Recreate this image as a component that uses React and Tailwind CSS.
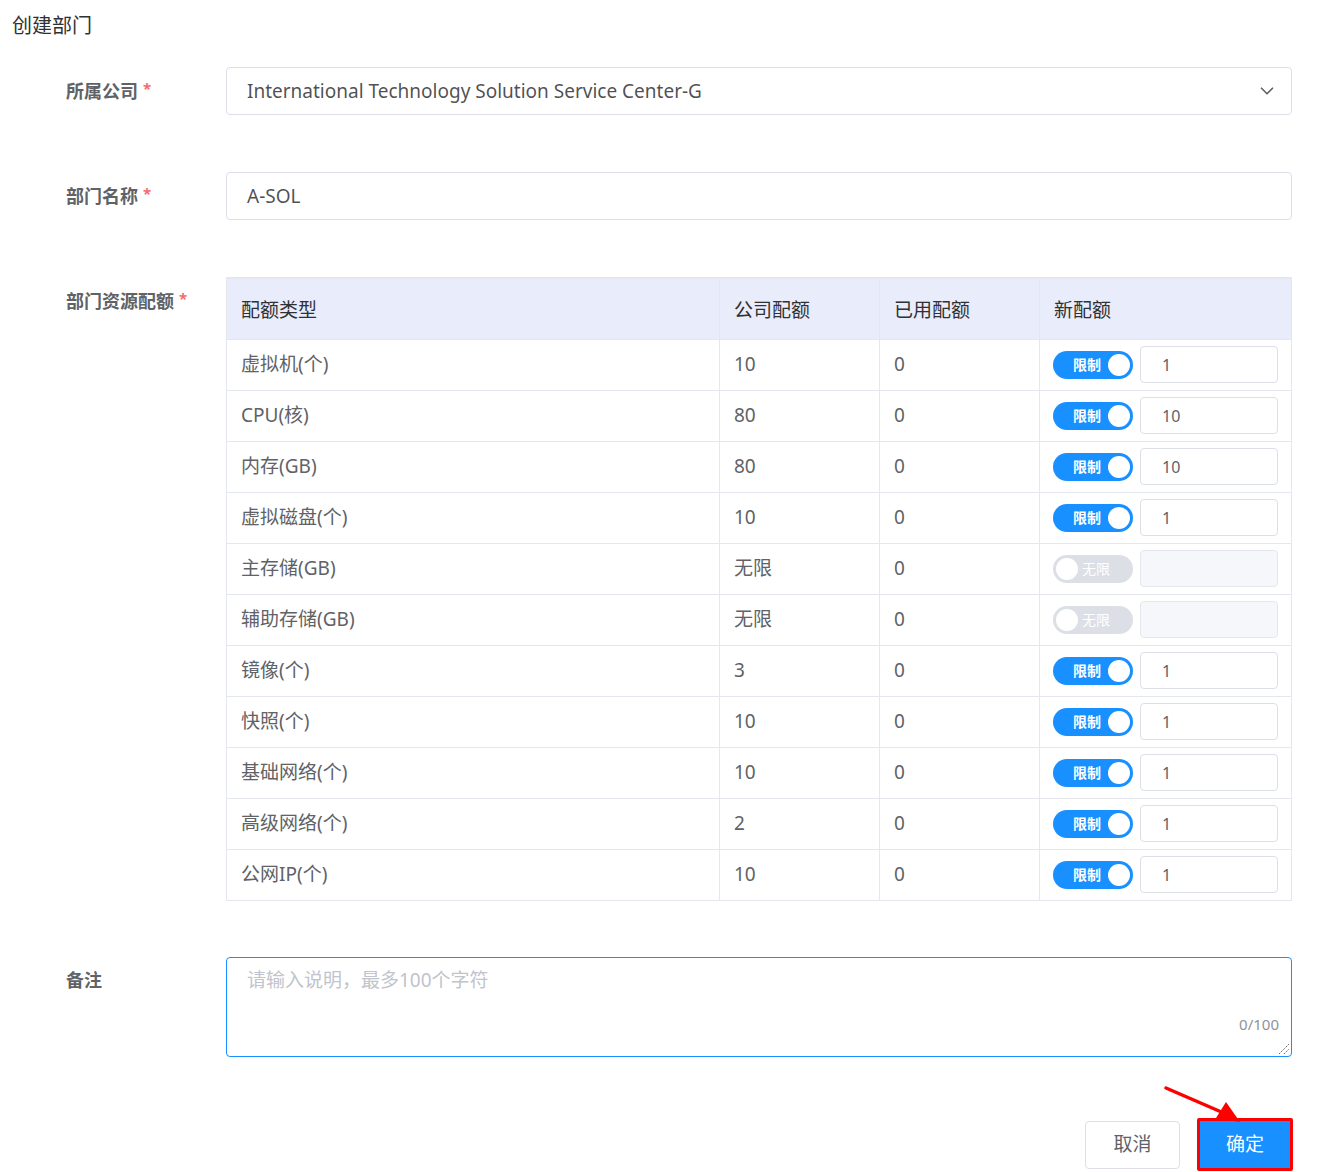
import { ChevronDown } from "lucide-react";

const rows = [
  { name: "虚拟机(个)", company: "10", used: "0", limit: true, value: "1" },
  { name: "CPU(核)", company: "80", used: "0", limit: true, value: "10" },
  { name: "内存(GB)", company: "80", used: "0", limit: true, value: "10" },
  { name: "虚拟磁盘(个)", company: "10", used: "0", limit: true, value: "1" },
  { name: "主存储(GB)", company: "无限", used: "0", limit: false, value: "" },
  { name: "辅助存储(GB)", company: "无限", used: "0", limit: false, value: "" },
  { name: "镜像(个)", company: "3", used: "0", limit: true, value: "1" },
  { name: "快照(个)", company: "10", used: "0", limit: true, value: "1" },
  { name: "基础网络(个)", company: "10", used: "0", limit: true, value: "1" },
  { name: "高级网络(个)", company: "2", used: "0", limit: true, value: "1" },
  { name: "公网IP(个)", company: "10", used: "0", limit: true, value: "1" },
];

const font = { fontFamily: '"Noto Sans", "Noto Sans CJK SC", sans-serif' };

function Label({ text, required }) {
  return (
    <div className="w-[160px] shrink-0 h-[48px] flex items-center text-[18px] font-bold text-[#606266]">
      {text}
      {required && <span className="text-[#f56c6c] ml-[5px] text-[15px] -mt-[6px]">*</span>}
    </div>
  );
}

function Switch({ on }) {
  if (on) {
    return (
      <div className="w-[80px] h-[28px] rounded-full bg-[#1890ff] flex items-center justify-between pl-[20px] pr-[3px]">
        <span className="text-white text-[14px] font-bold">限制</span>
        <span className="w-[22px] h-[22px] rounded-full bg-white" />
      </div>
    );
  }
  return (
    <div className="w-[80px] h-[28px] rounded-full bg-[#dcdfe6] flex items-center pl-[3px] gap-[4px]">
      <span className="w-[22px] h-[22px] rounded-full bg-white" />
      <span className="text-white text-[14px]">无限</span>
    </div>
  );
}

export default function App() {
  return (
    <div className="relative w-[1340px] h-[1172px] bg-white text-[#606266]" style={font}>
      <h1 className="pl-[12px] pt-[12px] text-[20px] leading-[28px] text-[#303133]">创建部门</h1>

      <div className="pl-[66px] pr-[48px] mt-[27px] flex flex-col gap-[57px]">
        {/* company */}
        <div className="flex">
          <Label text="所属公司" required />
          <div className="flex-1 h-[48px] border border-[#dcdfe6] rounded-[4px] flex items-center justify-between pl-[20px] pr-[13px]">
            <span className="text-[19px] text-[#303133]/85">International Technology Solution Service Center-G</span>
            <ChevronDown size={22} strokeWidth={1.8} className="text-[#606266]" />
          </div>
        </div>

        {/* name */}
        <div className="flex">
          <Label text="部门名称" required />
          <div className="flex-1 h-[48px] border border-[#dcdfe6] rounded-[4px] flex items-center pl-[20px]">
            <span className="text-[19px] text-[#303133]/85">A-SOL</span>
          </div>
        </div>

        {/* quota table */}
        <div className="flex">
          <Label text="部门资源配额" required />
          <div className="flex-1">
            <table className="w-full border-collapse table-fixed border border-[#e4e7ed] border-t-2 text-[19px]">
              <colgroup>
                <col className="w-[493px]" />
                <col className="w-[160px]" />
                <col className="w-[160px]" />
                <col />
              </colgroup>
              <thead>
                <tr className="h-[61px] bg-[#e8ecfb] text-[#303133] text-left">
                  <th className="font-normal pl-[14px] pt-[2px] border-r border-b border-[#e4e7ed]">配额类型</th>
                  <th className="font-normal pl-[14px] pt-[2px] border-r border-b border-[#e4e7ed]">公司配额</th>
                  <th className="font-normal pl-[14px] pt-[2px] border-r border-b border-[#e4e7ed]">已用配额</th>
                  <th className="font-normal pl-[14px] pt-[2px] border-b border-[#e4e7ed]">新配额</th>
                </tr>
              </thead>
              <tbody>
                {rows.map((r) => (
                  <tr key={r.name} className="h-[51px]">
                    <td className="pl-[14px] border-r border-b border-[#e4e7ed]">{r.name}</td>
                    <td className="pl-[14px] border-r border-b border-[#e4e7ed]">{r.company}</td>
                    <td className="pl-[14px] border-r border-b border-[#e4e7ed]">{r.used}</td>
                    <td className="pl-[13px] border-b border-[#e4e7ed]">
                      <div className="flex items-center gap-[7px]">
                        <Switch on={r.limit} />
                        <div
                          className={`w-[138px] h-[37px] rounded-[4px] border flex items-center pl-[21px] text-[16px] ${
                            r.limit ? "border-[#dcdfe6] bg-white" : "border-[#e4e7ed] bg-[#f5f7fa]"
                          }`}
                        >
                          {r.value}
                        </div>
                      </div>
                    </td>
                  </tr>
                ))}
              </tbody>
            </table>
          </div>
        </div>

        {/* remark */}
        <div className="flex -mt-[1px]">
          <Label text="备注" />
          <div className="flex-1 relative h-[100px] border border-[#1890ff] rounded-[4px] pl-[20px] pt-[8px]">
            <span className="text-[19px] text-[#c0c4cc]">请输入说明，最多100个字符</span>
            <span className="absolute right-[12px] bottom-[20px] text-[15px] text-[#909399]">0/100</span>
            <svg className="absolute right-[1px] bottom-[1px]" width="14" height="14" viewBox="0 0 14 14">
              <line x1="3" y1="13" x2="13" y2="3" stroke="#606266" strokeWidth="1" strokeDasharray="1.5 1" />
              <line x1="8" y1="13" x2="13" y2="8" stroke="#606266" strokeWidth="1" strokeDasharray="1.5 1" />
            </svg>
          </div>
        </div>
      </div>

      {/* actions */}
      <div className="flex justify-end gap-[17px] pr-[47px] mt-[61px]">
        <button className="w-[95px] h-[48px] mt-[3px] border border-[#dcdfe6] rounded-[4px] bg-white text-[19px] text-[#606266]">
          取消
        </button>
        <div className="w-[96px] h-[53px] border-[3px] border-[#ff0000] rounded-[2px]">
          <button className="w-full h-full bg-[#1890ff] text-white text-[19px]">确定</button>
        </div>
      </div>

      {/* annotation arrow */}
      <svg className="absolute left-[1160px] top-[1080px]" width="90" height="50" viewBox="0 0 90 50">
        <line x1="6" y1="8" x2="66" y2="34" stroke="#ff0000" strokeWidth="3.5" strokeLinecap="round" />
        <polygon points="80,42 56,38 66,22" fill="#ff0000" />
      </svg>
    </div>
  );
}
